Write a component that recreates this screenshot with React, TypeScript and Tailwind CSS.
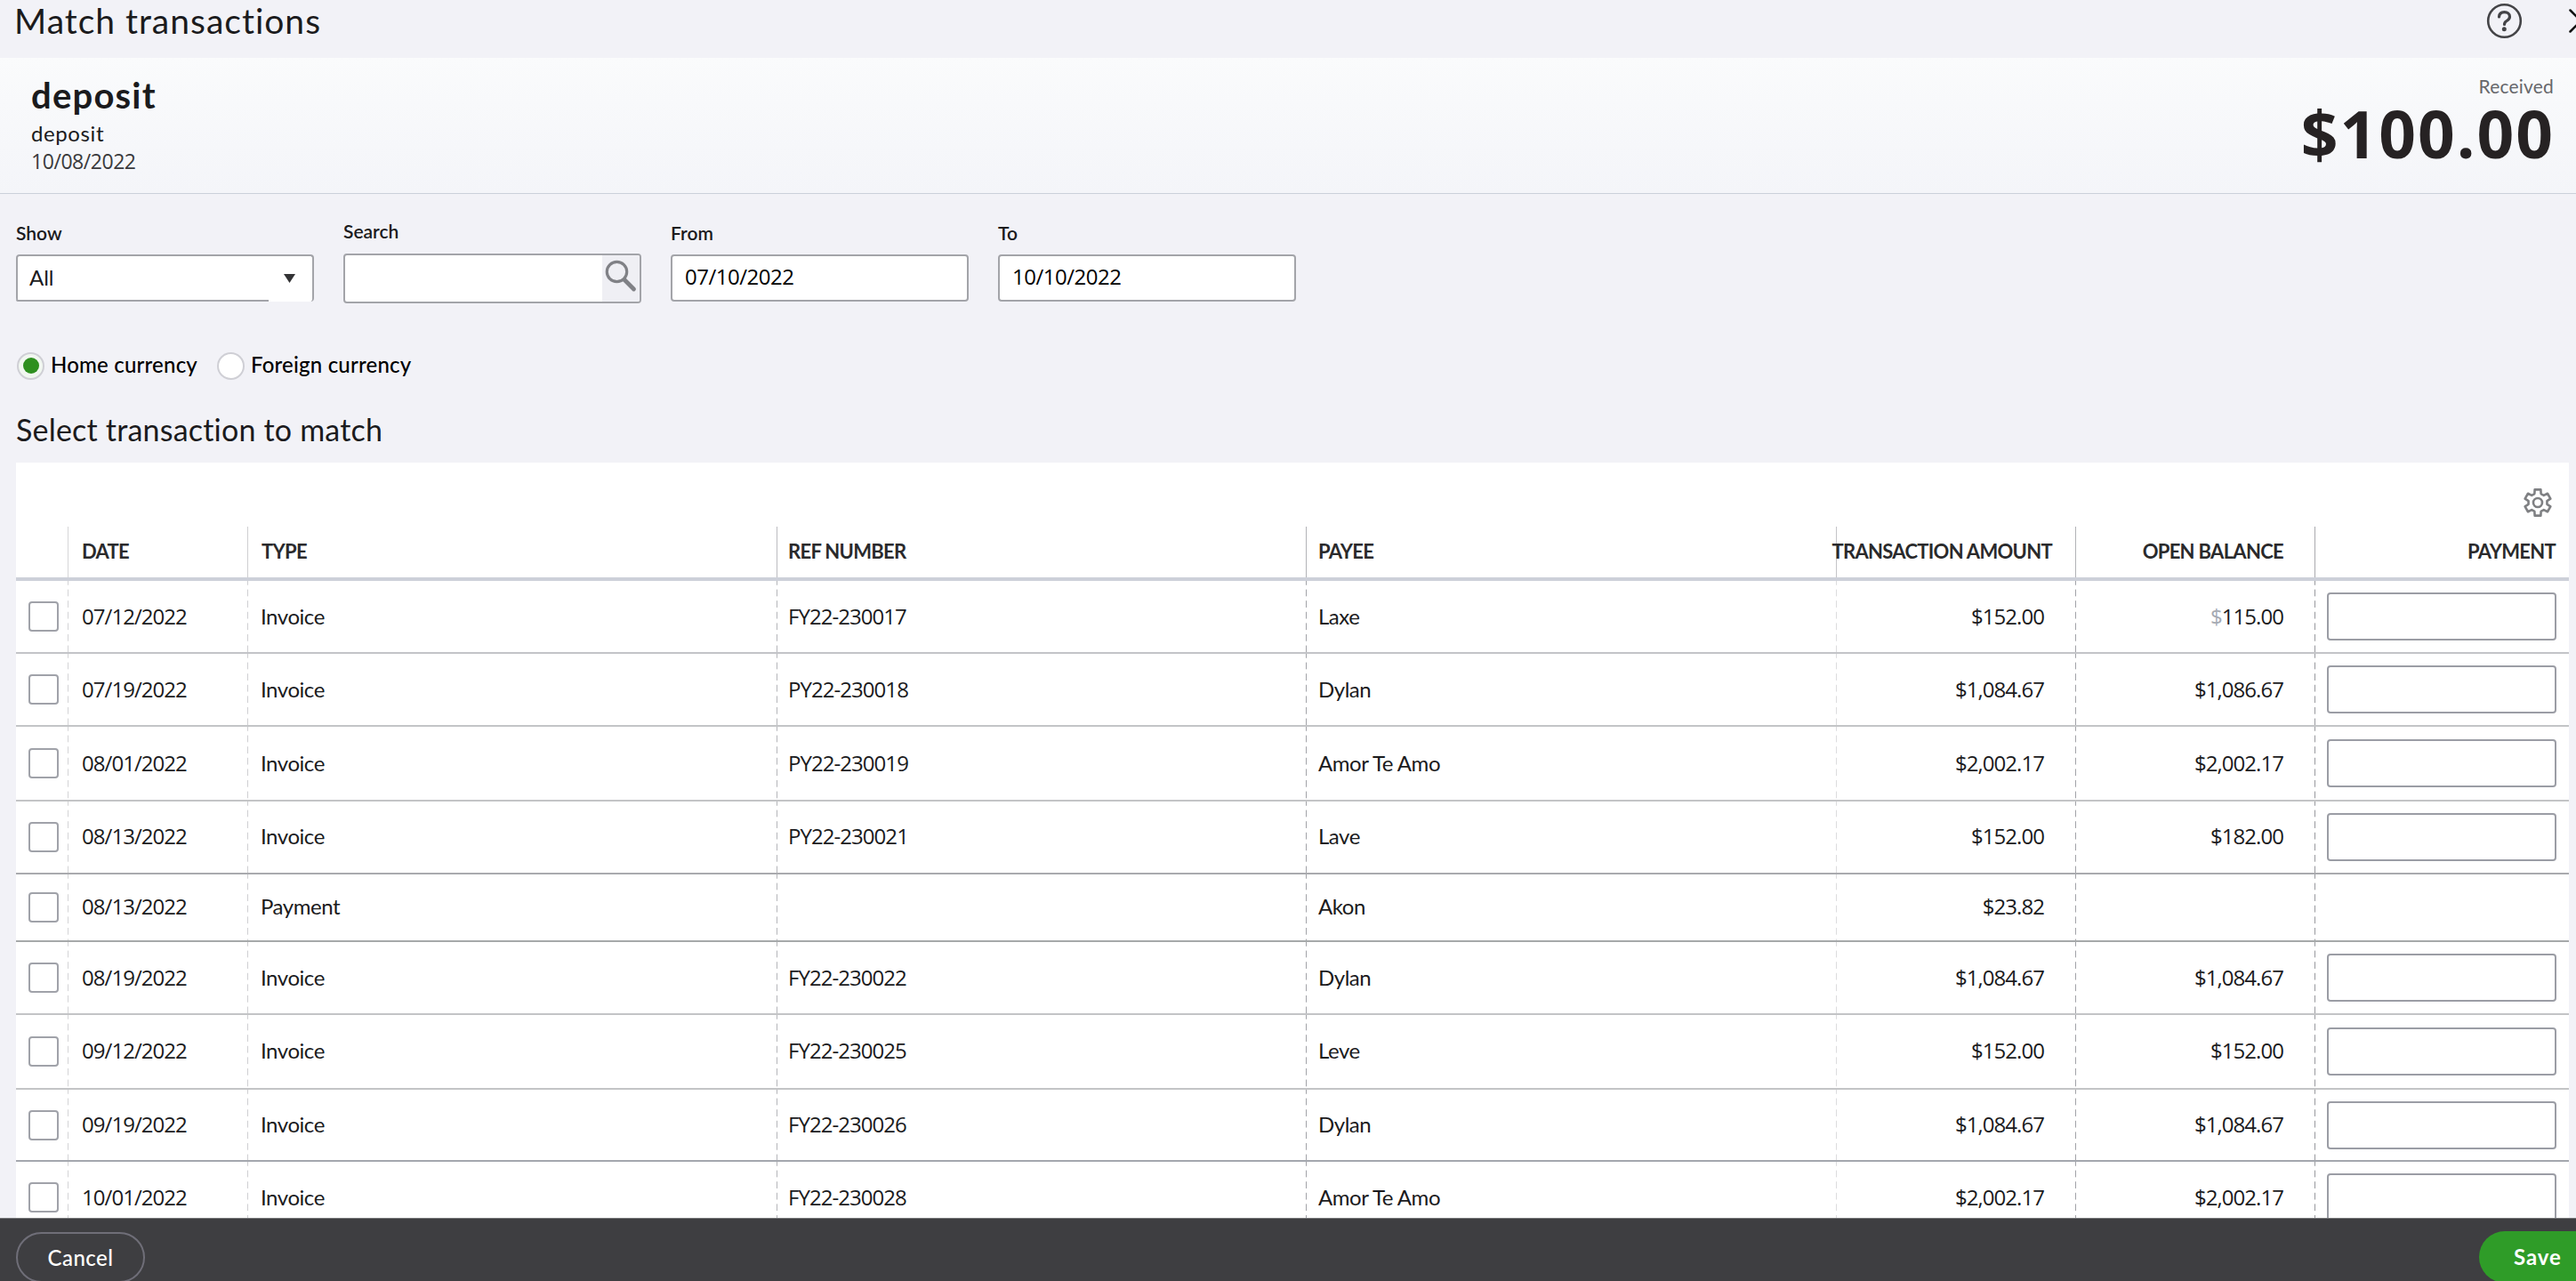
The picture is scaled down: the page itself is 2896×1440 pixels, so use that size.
import React from "react";

type Transaction = {
  date: string;
  type: string;
  ref: string;
  payee: string;
  amount: string;
  balance: string;
  payable: boolean;
  row: string; // height + bottom rule
  lift?: string; // nudges the text line inside the row
};

const transactions: Transaction[] = [
  { date: "07/12/2022", type: "Invoice", ref: "FY22-230017", payee: "Laxe", amount: "$152.00", balance: "$115.00", payable: true, row: "h-[82px] border-[#c3c4c8]" },
  { date: "07/19/2022", type: "Invoice", ref: "PY22-230018", payee: "Dylan", amount: "$1,084.67", balance: "$1,086.67", payable: true, row: "h-[82px] border-[#c3c5c7]" },
  { date: "08/01/2022", type: "Invoice", ref: "PY22-230019", payee: "Amor Te Amo", amount: "$2,002.17", balance: "$2,002.17", payable: true, row: "h-[84px] border-[#c3c4c6]" },
  { date: "08/13/2022", type: "Invoice", ref: "PY22-230021", payee: "Lave", amount: "$152.00", balance: "$182.00", payable: true, row: "h-[82px] border-[#a9aaae]", lift: "pb-[2px]" },
  { date: "08/13/2022", type: "Payment", ref: "", payee: "Akon", amount: "$23.82", balance: "", payable: false, row: "h-[76px] border-[#a6a9aa]", lift: "pb-[3px]" },
  { date: "08/19/2022", type: "Invoice", ref: "FY22-230022", payee: "Dylan", amount: "$1,084.67", balance: "$1,084.67", payable: true, row: "h-[82px] border-[#c3c4c6]" },
  { date: "09/12/2022", type: "Invoice", ref: "FY22-230025", payee: "Leve", amount: "$152.00", balance: "$152.00", payable: true, row: "h-[84px] border-[#c3c4c6]", lift: "pb-[2px]" },
  { date: "09/19/2022", type: "Invoice", ref: "FY22-230026", payee: "Dylan", amount: "$1,084.67", balance: "$1,084.67", payable: true, row: "h-[81px] border-[#a4a7ae]", lift: "pb-[2px]" },
  { date: "10/01/2022", type: "Invoice", ref: "FY22-230028", payee: "Amor Te Amo", amount: "$2,002.17", balance: "$2,002.17", payable: true, row: "h-[82px] border-[#c3c4c6]" },
];

const columns = "grid grid-cols-[58px_202px_595px_595px_596px_269px_269px_286px]";

export default function App() {
  return (
    <div className="flex h-[1440px] w-[2896px] flex-col overflow-hidden bg-[#f2f2f7] font-['Lato',sans-serif] text-[#1b1b1d]">
      <header className="flex h-[65px] shrink-0 items-start pl-[16px]">
        <h1 className="flex-1 text-[39px] leading-[47px] tracking-[1px]">Match transactions</h1>
        <HelpIcon />
        <CloseIcon />
      </header>

      <DepositSummary />

      <main className="min-h-0 flex-1 overflow-hidden pl-[18px]">
        <Filters />

        <div className="mt-[54px] flex h-[32px] items-center pl-px">
          <Radio label="Home currency" checked />
          <div className="w-[22px]" />
          <Radio label="Foreign currency" />
        </div>

        <h2 className="mt-[36px] text-[34px] leading-[40px] tracking-[0.2px]">Select transaction to match</h2>

        <TransactionTable />
      </main>

      <footer className="flex h-[71px] shrink-0 items-start justify-between overflow-hidden border-t border-[#77787a] bg-[#3e3e41] pl-[18px]">
        <button className="mt-[15px] h-[57px] w-[145px] rounded-full border-2 border-[#6f6e78] text-[24px] font-medium tracking-[0.5px] text-white">
          Cancel
        </button>
        <button className="-mr-[36px] mt-[14px] h-[58px] w-[145px] shrink-0 rounded-full bg-[#2f9c28] pl-[39px] text-left text-[24px] font-bold tracking-[0.9px] text-white">
          Save
        </button>
      </footer>
    </div>
  );
}

function DepositSummary() {
  return (
    <section className="flex h-[153px] shrink-0 justify-between border-b border-[#cbd0da] bg-gradient-to-b from-[#fafbfc] to-[#f4f5f9] pl-[35px] pr-[24px] pt-[17px]">
      <div>
        <div className="pt-[2px] text-[40px] font-bold leading-[46px] tracking-[1.2px]">deposit</div>
        <div className="text-[24px] leading-[40px] tracking-[0.6px]">deposit</div>
        <div className="font-['Open_Sans',sans-serif] text-[23px] leading-[23px] tracking-[-0.45px] text-[#3a3a3c]">10/08/2022</div>
      </div>
      <div className="text-right">
        <div className="pr-px text-[21px] leading-[30px] tracking-[0.2px] text-[#66676b]">Received</div>
        <div className="font-['Open_Sans',sans-serif] text-[73px] font-bold leading-[76px] tracking-[2px] text-[#262223]">
          $100.00
        </div>
      </div>
    </section>
  );
}

function Filters() {
  return (
    <div className="flex h-[123px] gap-[33px]">
      <div className="w-[335px] pt-[30px]">
        <Label>Show</Label>
        <div className="relative mt-[10px] flex h-[53px] items-center justify-between rounded-[4px] border-2 border-b-0 border-[#a3a4a9] bg-white pl-[13px] pr-[19px]">
          <span className="pb-[3px] text-[24px]">All</span>
          <svg className="mb-[2px] h-[10px] w-[13px]" viewBox="0 0 13 10">
            <path d="M0 0h13L6.500 10z" fill="#333335" />
          </svg>
          <span className="absolute -left-[2px] bottom-0 h-[2px] w-[284px] rounded-bl-[4px] bg-[#a3a4a9]" />
        </div>
      </div>

      <div className="w-[335px] pt-[28px]">
        <Label>Search</Label>
        <div className="mt-[11px] flex h-[56px] overflow-hidden rounded-[4px] border-2 border-[#a3a4a9] bg-white">
          <div className="flex-1" />
          <div className="w-[42px] bg-[#efeff4]">
            <svg className="h-[52px] w-[42px]" viewBox="0 0 42 52" fill="none" stroke="#808186" strokeLinecap="round">
              <circle cx="16.500" cy="18.500" r="11.200" strokeWidth="3.200" />
              <path d="M25 27.500 35.500 38" strokeWidth="4.800" />
            </svg>
          </div>
        </div>
      </div>

      <DateField label="From" value="07/10/2022" />
      <DateField label="To" value="10/10/2022" />
    </div>
  );
}

function Label({ children }: { children: React.ReactNode }) {
  return <div className="text-[21px] font-semibold leading-[28px]">{children}</div>;
}

function DateField({ label, value }: { label: string; value: string }) {
  return (
    <div className="w-[335px] pt-[30px]">
      <Label>{label}</Label>
      <div className="mt-[10px] flex h-[53px] items-center rounded-[4px] border-2 border-[#a3a4a9] bg-white pb-[3px] pl-[14px] font-['Open_Sans',sans-serif] text-[24px] font-medium tracking-[-0.5px] text-black">
        {value}
      </div>
    </div>
  );
}

function Radio({ label, checked }: { label: string; checked?: boolean }) {
  return (
    <div className="flex items-center gap-[7px]">
      <span
        className={`flex h-[31px] w-[31px] items-center justify-center rounded-full border-2 border-[#cfcfd5] ${
          checked ? "bg-[#f1f7f0]" : "bg-white"
        }`}
      >
        {checked && <span className="h-[18px] w-[18px] rounded-full bg-[#2e8f1f]" />}
      </span>
      <span className="-mt-[2px] text-[24px] font-medium leading-[30px] tracking-[0.2px] text-black">{label}</span>
    </div>
  );
}

/* ---------------- Table ---------------- */

function TransactionTable() {
  return (
    <section className="mt-[17px] w-[2870px] bg-white">
      <div className="flex h-[72px] justify-end pr-[18px] pt-[28px]">
        <GearIcon />
      </div>

      <div className={`${columns} h-[61px] border-b-4 border-[#cdd0d9] text-[22px] font-bold tracking-[-0.7px] text-[#2a2a2c]`}>
        <div />
        <HeaderCell className="border-[#d6d6d8] pl-[15px]">DATE</HeaderCell>
        <HeaderCell className="border-[#cfcfd1] pl-[15px]">TYPE</HeaderCell>
        <HeaderCell className="border-[#bcbcc0] pl-[12px]">REF NUMBER</HeaderCell>
        <HeaderCell className="border-[#b2b3b7] pl-[13px]">PAYEE</HeaderCell>
        <HeaderCell className="justify-end border-[#c4c4c8] pr-[26px]">TRANSACTION AMOUNT</HeaderCell>
        <HeaderCell className="justify-end border-[#b2b3b7] pr-[35px]">OPEN BALANCE</HeaderCell>
        <HeaderCell className="justify-end border-[#a9aaae] pr-[15px]">PAYMENT</HeaderCell>
      </div>

      {transactions.map((t, i) => (
        <div key={i} className={`${columns} border-b-2 text-[24px] ${t.row}`}>
          <div className="flex items-center pl-[14px]">
            <span className="h-[34px] w-[34px] rounded-[4px] border-2 border-[#a0a2a9] bg-white" />
          </div>
          <Cell numeric lift={t.lift} className="pl-[16px] text-[#d4d4d6]">{t.date}</Cell>
          <Cell lift={t.lift} className="pl-[15px] text-[#cfcfd2]">{t.type}</Cell>
          <Cell numeric lift={t.lift} className="pl-[13px] text-[#b4b5b9]">{t.ref}</Cell>
          <Cell lift={t.lift} className="pl-[14px] text-[#a2a3a8]">{t.payee}</Cell>
          <Cell numeric lift={t.lift} className="justify-end pr-[35px] text-[#dcdcde]">{t.amount}</Cell>
          <Cell numeric lift={t.lift} className="justify-end pr-[35px] text-[#a2a3a8]">
            {i === 0 ? (
              <>
                <span className="text-[#a6aab3]">$</span>
                {t.balance.slice(1)}
              </>
            ) : (
              t.balance
            )}
          </Cell>
          <Cell className="pl-[14px] text-[#98999e]">
            {t.payable && <span className="block h-[54px] w-[258px] rounded-[4px] border-2 border-[#9b9da5] bg-white" />}
          </Cell>
        </div>
      ))}
    </section>
  );
}

function HeaderCell({ className, children }: { className: string; children: React.ReactNode }) {
  return <div className={`flex items-center whitespace-nowrap border-l pb-[2px] ${className}`}>{children}</div>;
}

// The text colour passed in className tints the dashed column rule.
function Cell({
  className,
  lift = "",
  numeric,
  children,
}: {
  className: string;
  lift?: string;
  numeric?: boolean;
  children?: React.ReactNode;
}) {
  return (
    <div
      className={`flex items-center whitespace-nowrap bg-[linear-gradient(to_bottom,currentColor_60%,transparent_60%)] bg-[length:1px_12.6px] bg-[position:0_-3px] bg-repeat-y ${className}`}
    >
      <span
        className={`text-[#1b1b1d] ${lift} ${
          numeric ? "font-['Open_Sans',sans-serif] tracking-[-0.95px]" : "tracking-[-0.45px]"
        }`}
      >
        {children}
      </span>
    </div>
  );
}

/* ---------------- Icons ---------------- */

function HelpIcon() {
  return (
    <svg className="mt-[3px] h-[41px] w-[41px] shrink-0" viewBox="0 0 41 41" fill="none" stroke="#444447" strokeWidth="2.600" strokeLinecap="round">
      <circle cx="20.500" cy="20.500" r="18.300" />
      <path d="M14.500 16c.2-3.600 2.800-5.300 6-5.300 3.400 0 6 1.900 6 5 0 2.600-1.600 3.700-3.400 4.800-1.700 1-2.600 2-2.600 3.900" strokeWidth="3.200" />
      <circle cx="20.300" cy="29.700" r="2.500" fill="#444447" stroke="none" />
    </svg>
  );
}

function CloseIcon() {
  return (
    <svg className="-mr-[19px] ml-[52px] mt-[10px] h-[27px] w-[27px] shrink-0" viewBox="0 0 27 27" stroke="#111" strokeWidth="2.500" strokeLinecap="round">
      <path d="M1.500 1.500l24 24M25.500 1.500l-24 24" />
    </svg>
  );
}

// Six-toothed cog: four corners per tooth.
const cogPoints = Array.from({ length: 6 })
  .flatMap((_, k) =>
    [
      [-20, 10.6],
      [-13, 15],
      [13, 15],
      [20, 10.6],
    ].map(([offset, r]) => {
      const a = ((k * 60 - 90 + offset) * Math.PI) / 180;
      return `${(17 + r * Math.cos(a)).toFixed(2)},${(17 + r * Math.sin(a)).toFixed(2)}`;
    })
  )
  .join(" ");

function GearIcon() {
  return (
    <svg className="h-[34px] w-[34px]" viewBox="0 0 34 34" fill="none" stroke="#7f8083" strokeWidth="2.600" strokeLinejoin="round">
      <polygon points={cogPoints} />
      <circle cx="17" cy="17" r="5" />
    </svg>
  );
}
